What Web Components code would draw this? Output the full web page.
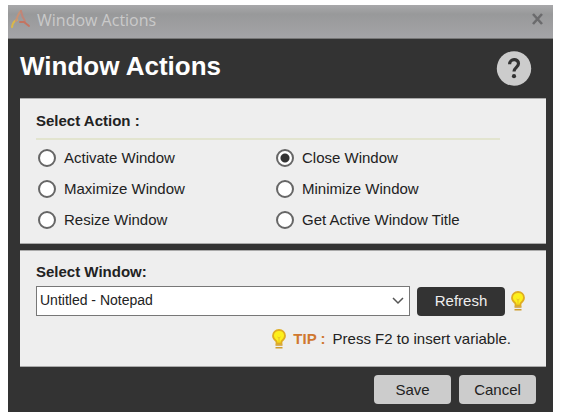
<!DOCTYPE html>
<html lang="en">
<head>
<meta charset="utf-8">
<meta name="viewport" content="width=device-width, initial-scale=1">
<title>Window Actions</title>
<style>
  body {
    margin: 0;
    padding: 5px 8px 7px;
    background: #fff;
    color: #222;
    font: 15px/18px "Liberation Sans", Arial, sans-serif;
  }
</style>
</head>
<body>

<dialog-window caption="Window Actions">
  <dialog-heading slot="header">Window Actions</dialog-heading>
  <action-picker value="close"></action-picker>
  <window-picker></window-picker>
  <dialog-button slot="footer">Save</dialog-button>
  <dialog-button slot="footer">Cancel</dialog-button>
</dialog-window>

<script>
class DialogWindow extends HTMLElement {

  constructor() {
    super();
    this.attachShadow({ mode: 'open' });
  }

  /**
   * title bar, header, stacked panels and a footer with the buttons
   */
  getHTML() {
    const caption = this.getAttribute('caption') || '';

    return `
      <style>
        :host {
          display: block;
          background: #333;
        }
        .titlebar {
          display: flex;
          align-items: flex-start;
          gap: 6px;
          height: 33px;
          padding: 0 9px 0 3px;
          border-bottom: 1px solid #777;
          background: linear-gradient(#a8a8aa, #98999a 28%, #a4a4a7);
        }
        .titlebar svg {
          flex: none;
          margin-top: 4px;
        }
        .caption {
          flex: 1;
          color: #cacaca;
          font: 16px/30px "Open Sans", "Noto Sans", sans-serif;
        }
        .close {
          display: flex;
          padding: 4px 0;
          border: 0;
          background: none;
        }
        .panels {
          display: grid;
          gap: 6px;
          padding: 0 7px 0 12px;
        }
        footer {
          display: flex;
          justify-content: flex-end;
          gap: 8px;
          padding: 8px 17px 8px 12px;
        }
      </style>
      <div class="titlebar">
        <svg width="20" height="20" viewBox="0 0 20 20" fill="none" stroke-linecap="round" aria-hidden="true">
          <path d="M1 18 Q2 12 6 11" stroke="#d9b84a" stroke-width="2"/>
          <path d="M5 12 Q7 5 10 2" stroke="#c99274" stroke-width="2"/>
          <path d="M10 2 Q11 8 14 12" stroke="#c08578" stroke-width="2"/>
          <path d="M9 13 L13 13 L18 17" stroke="#c47461" stroke-width="2"/>
        </svg>
        <span class="caption">${caption}</span>
        <button class="close" type="button" aria-label="Close">
          <svg width="14" height="13" viewBox="0 0 14 13" stroke="#6b6b6d" stroke-width="2.6">
            <path d="M3 1 L12 11 M12 1 L3 11"/>
          </svg>
        </button>
      </div>
      <slot name="header"></slot>
      <div class="panels"><slot></slot></div>
      <footer><slot name="footer"></slot></footer>
    `;
  }

  connectedCallback() {
    this.shadowRoot.innerHTML = this.getHTML();
  }
}

class DialogHeading extends HTMLElement {

  constructor() {
    super();
    this.attachShadow({ mode: 'open' });
  }

  getHTML() {
    return `
      <style>
        :host {
          display: flex;
          align-items: center;
          justify-content: space-between;
          padding: 12px 21px 12px 12px;
          color: #fff;
        }
        h1 {
          margin: 0;
          padding-bottom: 5px;
          font-size: 26px;
          line-height: 30px;
        }
        button {
          display: flex;
          padding: 0;
          border: 0;
          background: none;
        }
      </style>
      <h1><slot></slot></h1>
      <button type="button" aria-label="Help">
        <svg width="36" height="35" viewBox="0 0 36 35" fill="none">
          <circle cx="18" cy="17.5" r="17.2" fill="#ccc"/>
          <path d="M13.6 13.3 C13.6 7.3 22.5 7.3 22.5 12.6 C22.5 16.3 18 16.4 18 20.6" stroke="#333" stroke-width="3.2"/>
          <circle cx="18" cy="25.2" r="2.1" fill="#333"/>
        </svg>
      </button>
    `;
  }

  connectedCallback() {
    this.shadowRoot.innerHTML = this.getHTML();
  }
}

class DialogPanel extends HTMLElement {

  constructor() {
    super();
    this.attachShadow({ mode: 'open' });
    this.shadowRoot.innerHTML = `
      <style>
        :host {
          display: block;
          padding: 12px 16px;
          border-top: 1px solid #aaa;
          border-bottom: 1px solid #aaa;
          background: #eee;
        }
      </style>
      <slot></slot>
    `;
  }
}

class ActionPicker extends HTMLElement {

  constructor() {
    super();
    this.attachShadow({ mode: 'open' });
  }

  get actions() {
    return [
      ['activate', 'Activate Window'],
      ['close', 'Close Window'],
      ['maximize', 'Maximize Window'],
      ['minimize', 'Minimize Window'],
      ['resize', 'Resize Window'],
      ['title', 'Get Active Window Title']
    ];
  }

  /**
   * all radios share this shadow root, so they form one group
   */
  getHTML() {
    const value = this.getAttribute('value');
    const options = this.actions.map(([id, text]) => `
      <label>
        <input type="radio" name="action" value="${id}" ${id === value ? 'checked' : ''}>
        ${text}
      </label>
    `).join('');

    return `
      <style>
        :host {
          display: block;
        }
        h2 {
          margin: 0 30px 0 0;
          padding: 1px 0 8px;
          border-bottom: 2px solid #e2e4cf;
          font-size: 15px;
          line-height: 18px;
        }
        .options {
          display: grid;
          grid-template-columns: 238px 1fr;
          row-gap: 11px;
          padding: 8px 0 1px 2px;
        }
        label {
          display: flex;
          align-items: center;
          gap: 8px;
          line-height: 20px;
        }
        input {
          appearance: none;
          flex: none;
          width: 18px;
          height: 18px;
          margin: 0;
          border: 2px solid #666;
          border-radius: 50%;
          background: #fff;
        }
        input:checked {
          background: radial-gradient(circle, #333 4px, #fff 5px);
        }
      </style>
      <dialog-panel>
        <h2>Select Action :</h2>
        <div class="options" role="radiogroup" aria-label="Select Action">${options}</div>
      </dialog-panel>
    `;
  }

  connectedCallback() {
    this.shadowRoot.innerHTML = this.getHTML();
  }
}

class WindowPicker extends HTMLElement {

  constructor() {
    super();
    this.attachShadow({ mode: 'open' });
  }

  getHTML() {
    return `
      <style>
        :host {
          display: block;
        }
        label {
          display: block;
          padding-bottom: 5px;
          font-weight: bold;
        }
        .row {
          display: flex;
          align-items: center;
          padding-right: 5px;
        }
        .box {
          display: grid;
          flex: 1;
          align-items: center;
          margin-right: 7px;
        }
        .box > * {
          grid-area: 1 / 1;
        }
        select {
          appearance: none;
          width: 100%;
          height: 30px;
          padding: 0 24px 2px 3px;
          border: 1px solid #777;
          border-radius: 0;
          background: #fff;
          color: #222;
          font: 14px/18px "Liberation Sans", Arial, sans-serif;
        }
        .box svg {
          justify-self: end;
          margin-right: 6px;
          pointer-events: none;
        }
        light-bulb {
          margin-left: 6px;
        }
        p {
          display: flex;
          align-items: center;
          justify-content: flex-end;
          margin: 0;
          padding: 13px 19px 5px 0;
        }
        strong {
          padding: 0 7px;
          color: #d07830;
        }
      </style>
      <dialog-panel>
        <label for="window">Select Window:</label>
        <div class="row">
          <div class="box">
            <select id="window"><option>Untitled - Notepad</option></select>
            <svg width="12" height="8" viewBox="0 0 12 8" fill="none" stroke="#555" stroke-width="1.5">
              <path d="M1 1 L6 6 L11 1"/>
            </svg>
          </div>
          <dialog-button kind="dark">Refresh</dialog-button>
          <light-bulb></light-bulb>
        </div>
        <p><light-bulb></light-bulb><strong>TIP :</strong><span>Press F2 to insert variable.</span></p>
      </dialog-panel>
    `;
  }

  connectedCallback() {
    this.shadowRoot.innerHTML = this.getHTML();
  }
}

class DialogButton extends HTMLElement {

  constructor() {
    super();
    this.attachShadow({ mode: 'open' });
    this.shadowRoot.innerHTML = `
      <style>
        :host {
          --face: #ccc;
          --text: #222;
          --width: 77px;
          display: block;
        }
        :host([kind="dark"]) {
          --face: #333;
          --text: #eee;
          --width: 88px;
        }
        button {
          display: block;
          width: var(--width);
          height: 29px;
          padding: 0;
          border: 0;
          border-radius: 4px;
          background: var(--face);
          color: var(--text);
          font: inherit;
        }
      </style>
      <button type="button"><slot></slot></button>
    `;
  }
}

class LightBulb extends HTMLElement {

  constructor() {
    super();
    this.attachShadow({ mode: 'open' });
    this.shadowRoot.innerHTML = `
      <style>
        :host {
          display: flex;
        }
      </style>
      <svg width="14" height="20" viewBox="0 0 14 20" fill="none" aria-hidden="true">
        <path d="M4.5 14.5 V12.5 C2.6 11 1 9.4 1 6.8 C1 3.4 3.6 1 7 1 S13 3.4 13 6.8 C13 9.4 11.4 11 9.5 12.5 V14.5 Z" fill="#fdf01c" stroke="#dfac22" stroke-width="1.8"/>
        <path d="M5.5 8 L7 9 L8.5 8 M7 9 V14" stroke="#e8c322"/>
        <path d="M3.5 16 H10.5 M3.5 18.7 H10.5" stroke="#cf9d2c" stroke-width="1.6"/>
      </svg>
    `;
  }
}

customElements.define('dialog-panel', DialogPanel);
customElements.define('dialog-button', DialogButton);
customElements.define('light-bulb', LightBulb);
customElements.define('dialog-heading', DialogHeading);
customElements.define('action-picker', ActionPicker);
customElements.define('window-picker', WindowPicker);
customElements.define('dialog-window', DialogWindow);
</script>
</body>
</html>
